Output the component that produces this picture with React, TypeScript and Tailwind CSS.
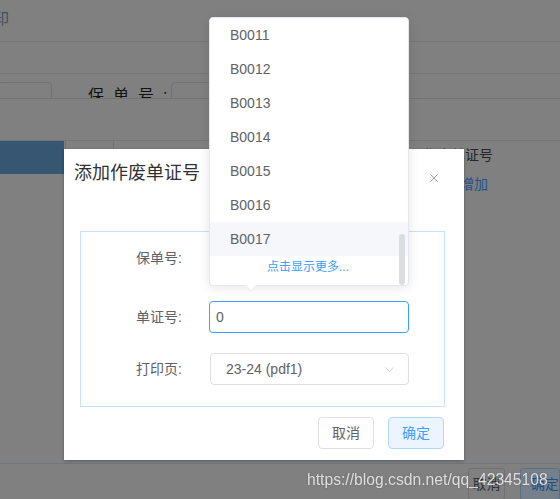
import { X, ChevronDown } from "lucide-react";

const codes = ["B0011", "B0012", "B0013", "B0014", "B0015", "B0016", "B0017"];

function BackgroundPage() {
  return (
    <div className="flex flex-col h-[499px] text-[#2a2a2a]">
      <div className="h-[42px] border-b border-[#767676] pt-[7px]">
        <span className="-ml-[6px] text-[15px] text-[#3f4c5c]">印</span>
      </div>
      <div className="h-[32px] border-b border-[#767676]" />
      <div className="h-[24px] flex items-start overflow-hidden">
        <div className="mt-[8px] w-[54px] h-[32px] border border-[#727272] rounded-[4px] -ml-[2px] shrink-0" />
        <span className="ml-[36px] w-[83px] shrink-0 mt-[10px] text-[16px] tracking-[9px] text-[#111] whitespace-nowrap">保单号:</span>
        <div className="mt-[8px] w-[210px] h-[32px] border border-[#727272] rounded-[4px] shrink-0" />
      </div>
      <div className="h-[43px] border-t border-b border-[#737373]" />
      <div className="flex h-[33px]">
        <div className="w-[64px] bg-[#375671] shrink-0" />
        <div className="w-[49px] border-l border-r border-[#727272] h-[9px] ml-[1px]" />
        <div className="flex-1 flex justify-end pr-[67px]">
          <span className="text-[14px] mt-[4px] text-[#262626]">作废单证号</span>
        </div>
      </div>
      <div className="flex justify-end pr-[72px]">
        <span className="text-[14px] text-[#23508a]">增加</span>
      </div>
      <div className="flex-1" />
      <div className="h-[36px] border-t border-[#6f7680] flex items-start pt-[4px] pl-[468px] gap-[15px]">
        <div className="w-[55px] h-[32px] border border-[#707070] rounded-[3px] flex items-center justify-center text-[14px] text-[#333]">
          取消
        </div>
        <div className="w-[55px] h-[32px] border border-[#5a6f85] bg-[#76808b] rounded-[3px] flex items-center pl-[10px] text-[14px] text-[#20508a]">
          确定
        </div>
      </div>
    </div>
  );
}

function AddVoidDialog() {
  return (
    <div className="absolute left-[64px] top-[149px] w-[400px] h-[311px] bg-white shadow-[0_1px_3px_rgba(0,0,0,0.3)] flex flex-col">
      <div className="flex items-start justify-between pl-[10px] pr-[23px] pt-[12px] h-[82px]">
        <span className="text-[18px] leading-[24px] text-[#303133]">添加作废单证号</span>
        <X size={14} strokeWidth={1.5} className="mt-[10px] text-[#909399]" />
      </div>
      <div className="ml-[16px] mr-[19px] h-[176px] border border-[#c6e2ff] pt-[10px] text-[14px] text-[#606266]">
        <div className="flex items-center h-[32px]">
          <span className="w-[101px] text-right">保单号:</span>
          <div className="ml-[27px] w-[200px] h-[32px] border border-[#dcdfe6] rounded-[4px]" />
        </div>
        <div className="flex items-center h-[32px] mt-[27px]">
          <span className="w-[101px] text-right">单证号:</span>
          <div className="ml-[27px] w-[200px] h-[32px] border border-[#409eff] rounded-[4px] flex items-center pl-[6px] text-[14px] text-[#606266]">
            0
          </div>
        </div>
        <div className="flex items-center h-[32px] mt-[20px]">
          <span className="w-[101px] text-right">打印页:</span>
          <div className="ml-[28px] w-[199px] h-[32px] border border-[#dcdfe6] rounded-[4px] flex items-center justify-between pl-[15px] pr-[11px]">
            <span>23-24 (pdf1)</span>
            <ChevronDown size={15} strokeWidth={1.3} className="text-[#c0c4cc]" />
          </div>
        </div>
      </div>
      <div className="flex justify-end gap-[14px] pr-[20px] pt-[10px] text-[14px]">
        <button className="w-[56px] h-[32px] border border-[#dcdfe6] rounded-[4px] text-[#606266] bg-white">取消</button>
        <button className="w-[56px] h-[32px] border border-[#b3d8ff] rounded-[4px] text-[#409eff] bg-[#ecf5ff]">确定</button>
      </div>
    </div>
  );
}

function CodeDropdown() {
  return (
    <div className="absolute left-[209px] top-[17px] w-[200px] h-[269px] bg-white border border-[#e4e7ed] rounded-[4px] shadow-[0_2px_12px_rgba(0,0,0,0.1)]">
      <div className="flex flex-col">
        {codes.map((c) => (
          <div
            key={c}
            className={`h-[34px] flex items-center pl-[20px] text-[14px] text-[#606266] ${c === "B0017" ? "bg-[#f5f7fa]" : ""}`}
          >
            {c}
          </div>
        ))}
        <div className="h-[22px] flex items-center justify-center text-[12px] text-[#409eff] pr-[2px]">
          点击显示更多...
        </div>
      </div>
      <div className="absolute right-[3px] top-[216px] w-[6px] h-[51px] rounded-[3px] bg-[#dcdde0]" />
      <div className="absolute left-[35px] -bottom-[6px] w-0 h-0 border-l-[6px] border-r-[6px] border-t-[6px] border-l-transparent border-r-transparent border-t-[#ebeef5]" />
      <div className="absolute left-[35px] -bottom-[5px] w-0 h-0 border-l-[6px] border-r-[6px] border-t-[6px] border-l-transparent border-r-transparent border-t-white" />
    </div>
  );
}

export default function App() {
  return (
    <div
      className="relative w-[560px] h-[499px] overflow-hidden bg-[#808080]"
      style={{ fontFamily: '"Liberation Sans", "Noto Sans CJK SC", sans-serif' }}
    >
      <BackgroundPage />
      <AddVoidDialog />
      <CodeDropdown />
      <div className="absolute left-[307px] top-[468px] text-[15.7px] text-[#dedede] drop-shadow-[0_0_1px_rgba(0,0,0,0.2)] whitespace-nowrap">
        https://blog.csdn.net/qq_42345108
      </div>
    </div>
  );
}
